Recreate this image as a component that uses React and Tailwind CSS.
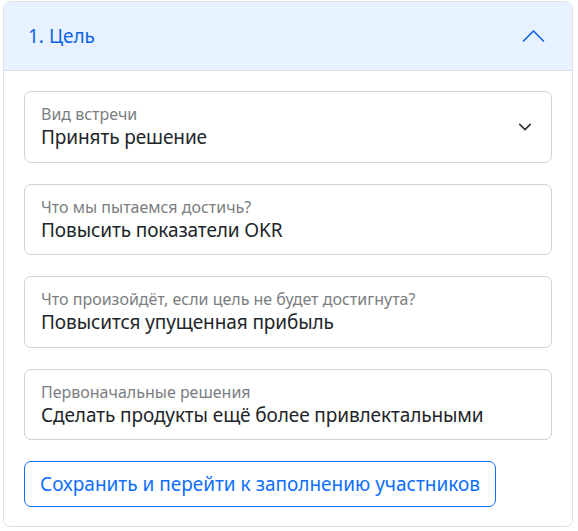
import { useState } from 'react'

const fields = [
    { label: 'Что мы пытаемся достичь?', value: 'Повысить показатели OKR' },
    { label: 'Что произойдёт, если цель не будет достигнута?', value: 'Повысится упущенная прибыль' },
    { label: 'Первоначальные решения', value: 'Сделать продукты ещё более привлектальными' },
]

function Field({ label, value, select }) {
    return (
        <div className="relative h-[71.5px] rounded-[7px] border border-[#ced4da] bg-white pl-[16px] pr-[48px] pt-[12px]">
            <div className="text-[16px] leading-[20px] text-[#7b7e81]">{label}</div>
            <div className="text-[19px] leading-[26px] text-[#212529] whitespace-nowrap tracking-[-0.1px]">{value}</div>
            {select && (
                <svg className="absolute right-[18px] top-[28px] h-[14px] w-[16px]" viewBox="0 0 16 16" fill="none"
                    stroke="#343a40" strokeWidth="2" strokeLinecap="round" strokeLinejoin="round">
                    <path d="M2 5l6 6 6-6" />
                </svg>
            )}
        </div>
    )
}

export default function App() {
    const [open, setOpen] = useState(true)

    return (
        <div className="min-h-screen bg-white pl-[3px] pr-[5px] pt-[1px]" style={{ fontFamily: '"Noto Sans", "Open Sans", sans-serif' }}>
            <div className="rounded-[7px] border border-[#dee2e6] overflow-hidden">
                <button type="button" onClick={() => setOpen(o => !o)}
                    className="flex h-[69px] w-full items-center justify-between border-b border-[#dee2e6] bg-[#e7f1ff] pl-[24px] pr-[27px] text-left">
                    <span className="text-[19px] text-[#0c63e4]">1. Цель</span>
                    <svg className="h-[14px] w-[23px]" viewBox="0 0 23 14" fill="none" stroke="#0c63e4" strokeWidth="1.6" strokeLinecap="round" strokeLinejoin="round">
                        <path d="M1.5 12L11.5 2l10 10" />
                    </svg>
                </button>
                {open && (
                    <div className="flex flex-col gap-[21px] px-[20px] pt-[20px] pb-[19px]">
                        <Field label="Вид встречи" value="Принять решение" select />
                        {fields.map(f => <Field key={f.label} {...f} />)}
                        <div>
                            <button type="button"
                                className="h-[46px] rounded-[7px] border border-[#0d6efd] px-[15px] text-[19px] text-[#0d6efd]">
                                Сохранить и перейти к заполнению участников
                            </button>
                        </div>
                    </div>
                )}
            </div>
        </div>
    )
}
